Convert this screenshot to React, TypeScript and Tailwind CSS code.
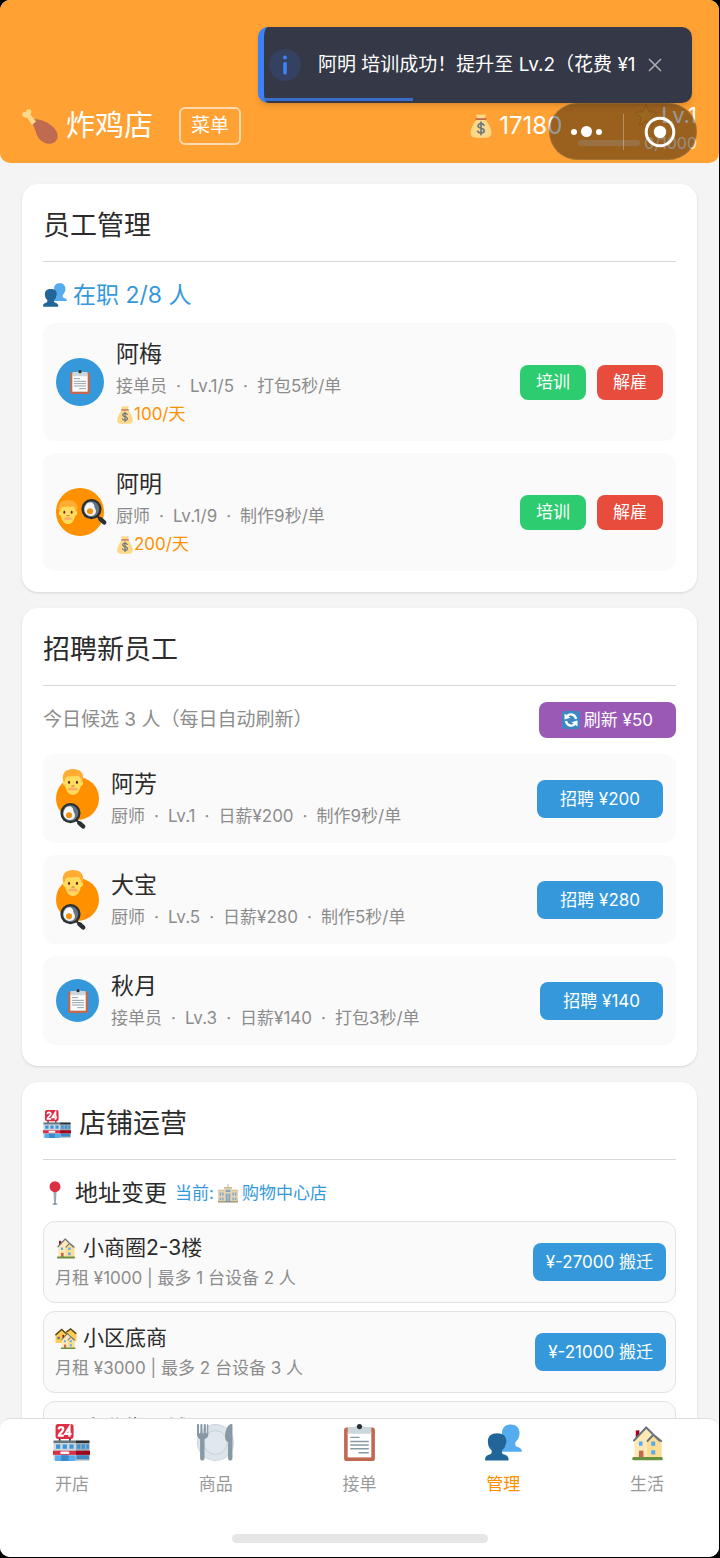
/**
 * Staff management screen of the shop game.
 */

import type { ReactNode } from 'react';

type IconProps = { className?: string };

function Svg({ className = 'size-6', children }: IconProps & { children: ReactNode }) {
  return (
    <svg viewBox="0 0 36 36" className={`shrink-0 ${className}`} aria-hidden="true">
      {children}
    </svg>
  );
}

function DrumstickIcon({ className }: IconProps) {
  return (
    <Svg className={className}>
      <path fill="#BE6B50" d="M11.500 11.400c5-.7 12.500 1.600 18.500 6.600 6.500 5.500 7.300 12.200 3 15.800-4.600 3.800-11.500 2-15.700-2.800-3.300-3.800-3.500-9.800-7.300-15.400-.9-1.400-.4-3.800 1.500-4.200z" />
      <path fill="#FFD98A" d="M2 9C-.4 7.600-.4 4.600 2 4c.7-.1 1.400 0 2 .3C3.800 2 6 .4 8 1.600c1.700 1 1.700 3.400.4 4.900l5.600 7-4 3.400L5 9.400C4.200 9.800 3 9.700 2 9z" />
    </Svg>
  );
}

function MoneyBagIcon({ className }: IconProps) {
  return (
    <Svg className={className}>
      <path fill="#FDD888" d="M12 8h12c3.500 4 8.500 10.500 9.500 19 .8 6-3 8.500-8 8.500h-15c-5 0-8.800-2.500-8-8.500C3.500 18.500 8.500 12 12 8z" />
      <path fill="#FDD888" d="M10.500 1.500c2.500-2 5 .5 7.500-.8 2.500 1.300 5-1.200 7.500.8L23.500 7h-11z" />
      <path fill="#BF6952" d="M11 6.500h14c1.500 0 1.500 2.500 0 2.500H11c-1.500 0-1.500-2.500 0-2.500z" />
      <path fill="none" stroke="#67757F" strokeWidth="2.400" strokeLinecap="round" d="M22.500 17c-.7-1.800-2.500-2.500-4.500-2.500-2.600 0-4.500 1.300-4.500 3.400 0 4.700 9.300 2.200 9.300 7 0 2.300-2 3.600-4.800 3.600-2.600 0-4.300-.9-5-2.800M18 12v19" />
    </Svg>
  );
}

function PeopleIcon({ className }: IconProps) {
  return (
    <Svg className={className}>
      <path fill="#55ACEE" d="M16.500 9C16.500 3.500 19.800.5 25 .5s8.600 3 8.600 8.500c0 3.700-1.800 6.900-4.100 8.600v2.300c0 1.300.8 2 2.300 2.500 2.600.8 4.200 2 4.200 4.600H14c0-2.600 1.600-3.800 4.200-4.600 1.500-.5 2.300-1.200 2.300-2.500v-2.300c-2.300-1.700-4-4.900-4-8.600z" />
      <path fill="#226699" d="M2.800 17C2.800 11.800 6 9 11.800 9s9 2.800 9 8c0 3.800-1.900 7-4.300 8.600v1.900c0 1.200.8 1.800 2.300 2.200 2.600.8 4.200 2 4.200 5.300 0 .3-.3.500-.6.500H.6c-.4 0-.6-.2-.6-.5 0-3.300 1.600-4.500 4.200-5.300 1.500-.4 2.300-1 2.300-2.200v-1.900C4.100 24 2.800 20.800 2.800 17z" />
    </Svg>
  );
}

function ClipboardIcon({ className }: IconProps) {
  return (
    <Svg className={className}>
      <rect x="3" y="3.500" width="30" height="32.500" rx="2.500" fill="#C1694F" />
      <rect x="6.500" y="8" width="23" height="24.500" fill="#FFF" />
      <path fill="#CCD6DD" d="M8 3h6c0-2.500 8-2.500 8 0h6c1 0 1.500.8 1.500 2v4.500h-23V5c0-1.200.5-2 1.500-2z" />
      <circle cx="18" cy="2.500" r="2.500" fill="#292F33" />
      <path stroke="#8899A6" strokeWidth="1.400" strokeLinecap="round" d="M9.500 13h8M9.500 17h17M9.500 20.500h17M9.500 24h17M17.500 28h9" />
    </Svg>
  );
}

function FaceIcon({ className }: IconProps) {
  return (
    <Svg className={className}>
      <path fill="#FFAC33" d="M4 15C2.500 5.500 8.500 0 18 0s15.500 5.500 14 15c-.4 3-2.500 5-2.500 5h-23S4.400 18 4 15z" />
      <path fill="#FFDC5D" d="M4 19.500c0-2 1.500-2.600 2.700-2.600.2-3.500.8-6 3.800-6.500 4.500-.8 10 .2 14.500-1.200 3 1.200 4.200 4.700 4.300 7.700 1.200 0 2.700.6 2.700 2.600 0 2.500-1.600 4-3.200 4C27.500 30.500 23.500 36 18 36S8.500 30.500 7.200 23.500c-1.600 0-3.200-1.500-3.200-4z" />
      <ellipse cx="12.500" cy="18.500" rx="1.400" ry="2.200" fill="#662113" />
      <ellipse cx="23.500" cy="18.500" rx="1.400" ry="2.200" fill="#662113" />
      <path fill="none" stroke="#C1694F" strokeWidth="1.400" strokeLinecap="round" d="M16.500 23.500h3" />
      <path fill="#FFAC63" d="M10.500 29c1.500-3 5-4 7.500-2.800 2.500-1.200 6-.2 7.500 2.800-4 1-11 1-15 0z" />
    </Svg>
  );
}

function PanIcon({ className }: IconProps) {
  return (
    <Svg className={className}>
      <path stroke="#292F33" strokeWidth="3" d="M21 22l6 6" />
      <path stroke="#292F33" strokeWidth="6" strokeLinecap="round" d="M27 28l5 4.500" />
      <circle cx="14.500" cy="14" r="14" fill="#292F33" />
      <circle cx="14.500" cy="14" r="10.800" fill="#66757F" />
      <path fill="#F5F8FA" d="M7 8c3-4 7.500-4.300 10-1.500 1.800 2 1 4 2.500 6.500 2 3.500 1.500 8-2.500 9.800-4 1.700-9 .2-11.300-4C4 15.500 4.800 11 7 8z" />
      <circle cx="12.500" cy="17" r="4.200" fill="#F4900C" />
    </Svg>
  );
}

function RefreshIcon({ className }: IconProps) {
  return (
    <Svg className={className}>
      <rect width="36" height="36" rx="4" fill="#3B88C3" />
      <path fill="none" stroke="#FFF" strokeWidth="4.500" d="M8 20a10.500 10.500 0 0 0 18 6M28 16a10.500 10.500 0 0 0-18-6" />
      <path fill="#FFF" d="M5 17V5l12 8.500zM31 19v12l-12-8.500z" />
    </Svg>
  );
}

function StoreIcon({ className }: IconProps) {
  return (
    <Svg className={className}>
      <path stroke="#292F33" strokeWidth="1.600" d="M6.500 13v5M16.500 13v5" />
      <rect x="2.500" y="0" width="17.500" height="14.500" rx="2.500" fill="#DD2E44" />
      <path fill="none" stroke="#FFF" strokeWidth="2.200" d="M5.500 5.200C5.800 2.300 10 2.300 10 5.200c0 2.300-4.300 3.700-4.300 6.200h4.800M16 12.500V3l-4 6.500h6" />
      <path fill="#CCD6DD" d="M.5 18H22v17.500H.5z" />
      <path fill="#99AAB5" d="M22 18h13.500v17.500H22z" />
      <path fill="#67757F" d="M.5 16H22v2.500H.5z" />
      <path fill="#292F33" d="M22 16h13.500v2.500H22z" />
      <path fill="#3B94D9" d="M3 20h4v4H3zm6.500 0h4v4h-4zm6.500 0h4v4h-4zm7.500 0h3v4h-3zm4.500 0h3v4h-3zm4.500 0h2.500v4h-2.500z" />
      <path fill="#DD2E44" d="M0 26h22v4H0z" />
      <path fill="#A0041E" d="M22 26h14v4H22z" />
      <rect x="7" y="26.800" width="9" height="2.400" rx="1.200" fill="#FFF" />
      <path fill="#55ACEE" d="M2 30.500h20V36H2z" />
      <path fill="#3B88C3" d="M8 30.500h7V36H8zM23 30.500h12V34H23z" />
    </Svg>
  );
}

function PlateIcon({ className }: IconProps) {
  return (
    <Svg className={className}>
      <circle cx="18" cy="18" r="18" fill="#CCD6DD" />
      <circle cx="18" cy="18" r="17" fill="#DCE5EB" />
      <circle cx="18" cy="18" r="11.500" fill="#E1E8ED" stroke="#BDCAD3" strokeWidth=".8" />
      <path fill="#8899A6" d="M0 1c0-1.300 2-1.300 2 0v7.500c0 .8 1.300.8 1.300 0V1c0-1.300 2-1.300 2 0v7.500c0 .8 1.300.8 1.300 0V1c0-1.300 2-1.300 2 0v7.500c0 .8 1.200.8 1.200 0V1c0-1.300 1.200-1.300 1.200 0v9.500c0 2-1.600 3.800-3.700 4.300v18.500c0 3-4.300 3-4.300 0V14.800C1.300 14.200 0 12.800 0 10.500z" />
      <path fill="#8899A6" d="M34.500 1v32.300c0 3-4.300 3-4.300 0V17.500c-2.800-.8-3.300-4-2.700-8C28.300 4 31 0 33.300 0c.7 0 1.200.4 1.200 1z" />
    </Svg>
  );
}

function HouseShape() {
  return (
    <g transform="translate(2.200 1.500) scale(.88 .94)">
      <path fill="#A0041E" d="M5 5h4v9H5z" />
      <path fill="#FFE8B6" d="M3.500 15L16 2.500 24 9l9.500 7v17h-30z" />
      <path fill="#FFD983" d="M17.500 16L24 9.500l9.500 6.500v17H17.500z" opacity=".7" />
      <path fill="none" stroke="#66757F" strokeWidth="2.200" strokeLinecap="round" strokeLinejoin="round" d="M3 15.500L16.500 2 31 15.500M18 16l6.500-6.500L33 16" />
      <path fill="#55ACEE" d="M8.500 16.500h4v4.500h-4zm13.500 0h4.500v4.500H22zm0 9h4.500V30H22z" />
      <path fill="#C1694F" d="M8.500 26h5v8h-5z" />
      <rect x="1" y="32.500" width="34" height="3.500" rx="1.700" fill="#6A9140" />
    </g>
  );
}

function HouseIcon({ className }: IconProps) {
  return (
    <Svg className={className}>
      <HouseShape />
    </Svg>
  );
}

function HousesIcon({ className }: IconProps) {
  return (
    <Svg className={className}>
      <path fill="#FFCC4D" d="M1 12L11 3l9 9v14H1zM18 10l8-7 9 8v12H18z" />
      <path fill="none" stroke="#5C4B20" strokeWidth="2.400" strokeLinecap="round" d="M1.500 12.500L11 4l7 6.500M19 8l6.500-5L34 10.500" />
      <path fill="#66757F" d="M4 16h4v4H4z" />
      <g transform="translate(7 8) scale(.8)">
        <HouseShape />
      </g>
    </Svg>
  );
}

function MallIcon({ className }: IconProps) {
  return (
    <Svg className={className}>
      <path fill="#E6D5B0" d="M0 13h11V8h14v5h11v21H0z" />
      <path fill="#C9B78E" d="M0 12h11v2H0zm25 0h11v2H25zM11 7h14v2.500H11z" />
      <path stroke="#99AAB5" strokeWidth="1.400" d="M18 2v6" />
      <path fill="#7FA6C9" d="M3 17h2.500v6H3zm4.500 0H10v6H7.500zM26 17h2.500v6H26zm4.500 0H33v6h-2.500zM3 26h2.500v5H3zm4.500 0H10v5H7.500zM26 26h2.500v5H26zm4.500 0H33v5h-2.500zM14 12h8v4h-8zm0 7h3.300v15H14zm4.700 0H22v15h-3.300z" />
      <path fill="#8A7E63" d="M0 33h36v2H0z" />
    </Svg>
  );
}

function PinIcon({ className }: IconProps) {
  return (
    <Svg className={className}>
      <path fill="#99AAB5" d="M15.500 13h5l-1.200 21.500c-.1 1.500-2.500 1.500-2.600 0z" />
      <path fill="#66757F" d="M14 34.500c0-1 8-1 8 0s-8 1.500-8 0z" />
      <circle cx="18" cy="8.500" r="8.200" fill="#DD2E44" />
    </Svg>
  );
}

function StarIcon({ className }: IconProps) {
  return (
    <Svg className={className}>
      <path fill="#FFAC33" stroke="#D9912B" strokeWidth="1.500" d="M18 1l5 11.500 12.500 1.200-9.400 8.300L29 34.500l-11-6.600-11 6.600L9.900 22 .5 13.700 13 12.500z" />
    </Svg>
  );
}

type Role = 'cashier' | 'chef';

const employees: { name: string; role: Role; detail: string[]; wage: string }[] = [
  { name: '阿梅', role: 'cashier', detail: ['接单员', 'Lv.1/5', '打包5秒/单'], wage: '100/天' },
  { name: '阿明', role: 'chef', detail: ['厨师', 'Lv.1/9', '制作9秒/单'], wage: '200/天' },
];

const candidates: { name: string; role: Role; detail: string[]; price: string }[] = [
  { name: '阿芳', role: 'chef', detail: ['厨师', 'Lv.1', '日薪¥200', '制作9秒/单'], price: '¥200' },
  { name: '大宝', role: 'chef', detail: ['厨师', 'Lv.5', '日薪¥280', '制作5秒/单'], price: '¥280' },
  { name: '秋月', role: 'cashier', detail: ['接单员', 'Lv.3', '日薪¥140', '打包3秒/单'], price: '¥140' },
];

const locations = [
  { name: '小商圈2-3楼', Icon: HouseIcon, detail: '月租 ¥1000 | 最多 1 台设备 2 人', price: '¥-27000' },
  { name: '小区底商', Icon: HousesIcon, detail: '月租 ¥3000 | 最多 2 台设备 3 人', price: '¥-21000' },
  { name: '商业街旺铺', Icon: MallIcon },
];

const tabs = [
  { label: '开店', Icon: StoreIcon },
  { label: '商品', Icon: PlateIcon },
  { label: '接单', Icon: ClipboardIcon },
  { label: '管理', Icon: PeopleIcon, active: true },
  { label: '生活', Icon: HouseIcon },
];

function Card({ title, icon, children }: { title: string; icon?: ReactNode; children: ReactNode }) {
  return (
    <section className="rounded-2xl bg-white p-[21px] shadow-sm">
      <h2 className="mb-4 flex items-center gap-2 border-b border-[#d8d8d8] pb-3.5 text-[27px] leading-[42px] text-[#2b2b2b]">
        {icon}
        {title}
      </h2>
      {children}
    </section>
  );
}

function Avatar({ role, stacked }: { role: Role; stacked?: boolean }) {
  const size = stacked ? 'size-[43px]' : 'size-12';
  if (role === 'cashier') {
    return (
      <div className={`flex shrink-0 items-center justify-center rounded-full bg-[#3498db] ${size}`}>
        <ClipboardIcon className="size-6" />
      </div>
    );
  }
  return (
    <div
      className={`flex shrink-0 items-center rounded-full bg-[#ff9000] ${size} ${
        stacked ? 'flex-col justify-center gap-2 pr-2.5' : 'gap-px'
      }`}
    >
      <FaceIcon className={stacked ? 'size-[26px]' : 'size-6'} />
      <PanIcon className="size-[26px]" />
    </div>
  );
}

function Person({ name, detail, children }: { name: string; detail: string[]; children?: ReactNode }) {
  return (
    <div className="ml-3 flex-1">
      <div className="text-[23px] leading-9 text-[#2b2b2b]">{name}</div>
      <div className="text-[17px] leading-[29px] text-[#8c8c8c]">
        {detail.map((part, i) => (
          <span key={part}>
            {i > 0 && <span className="mx-[9px]">·</span>}
            {part}
          </span>
        ))}
      </div>
      {children}
    </div>
  );
}

function Header() {
  return (
    <header className="flex items-center rounded-b-[10px] bg-[#ffa133] px-[22px] pt-[95px] pb-1.5 text-white">
      <DrumstickIcon className="size-9" />
      <h1 className="ml-2 text-[29px] leading-10">炸鸡店</h1>
      <button type="button" className="ml-[26px] rounded-md border-2 border-white/60 px-2.5 text-[19px] leading-[34px]">
        菜单
      </button>
      <div className="ml-auto flex items-center gap-1.5">
        <MoneyBagIcon className="size-6" />
        <span className="text-2xl leading-9">17180</span>
      </div>
      <div className="ml-4 flex flex-col items-end pt-1.5">
        <div className="flex items-center gap-1 text-[22px] leading-7">
          <StarIcon className="size-[22px]" />
          Lv.1
        </div>
        <div className="flex items-center gap-1 text-base leading-7">
          <div className="h-1.5 w-[62px] rounded-full bg-white/30" />
          <span className="text-white/80">0/1000</span>
        </div>
      </div>
    </header>
  );
}

function Toast() {
  return (
    <div
      role="status"
      className="absolute top-[27px] right-[27px] flex h-[76px] w-[434px] items-center overflow-hidden rounded-[10px] border-l-[6px] border-[#3b82f6] bg-[#353846] pr-[30px] pl-[5px] text-[19px] text-white shadow-md"
    >
      <span className="flex size-8 shrink-0 items-center justify-center rounded-full bg-[#344160]">
        <svg viewBox="0 0 6 20" className="h-5 w-1.5" aria-hidden="true">
          <circle cx="3" cy="2.500" r="2" fill="#3b82f6" />
          <rect x="1.200" y="7" width="3.600" height="12.500" rx="1.500" fill="#3b82f6" />
        </svg>
      </span>
      <p className="ml-[17px] min-w-0 flex-1 whitespace-nowrap">阿明 培训成功！提升至 Lv.2（花费 ¥1</p>
      <button type="button" aria-label="关闭" className="text-white/60">
        <svg viewBox="0 0 14 14" className="size-3.5" aria-hidden="true">
          <path fill="none" stroke="currentColor" strokeWidth="1.500" d="M1 1l12 12M13 1L1 13" />
        </svg>
      </button>
      <div className="absolute bottom-0.5 left-0 h-[3px] w-[149px] bg-[#3b6ec8]" />
    </div>
  );
}

function Capsule() {
  return (
    <div className="absolute top-[103px] right-[22px] flex h-[57px] w-[148px] items-center rounded-full border border-white/10 bg-black/40">
      <button type="button" aria-label="更多" className="flex h-full flex-1 items-center justify-center gap-1">
        <span className="size-1.5 rounded-full bg-white" />
        <span className="size-[11px] rounded-full bg-white" />
        <span className="size-1.5 rounded-full bg-white" />
      </button>
      <span className="h-9 w-px bg-white/30" />
      <button type="button" aria-label="退出" className="flex h-full flex-1 items-center justify-center">
        <svg viewBox="0 0 32 32" className="size-8" aria-hidden="true">
          <circle cx="16" cy="16" r="13.800" fill="none" stroke="#fff" strokeWidth="3" />
          <circle cx="16" cy="16" r="6.200" fill="#fff" />
        </svg>
      </button>
    </div>
  );
}

function StaffCard() {
  return (
    <Card title="员工管理">
      <h3 className="mb-[11px] flex items-center gap-1.5 text-[23px] leading-[34px] text-[#3498db]">
        <PeopleIcon className="size-6" />
        在职 2/8 人
      </h3>
      <ul className="flex flex-col gap-3">
        {employees.map((e) => (
          <li key={e.name} className="flex items-center rounded-xl bg-[#fafafa] p-[13px]">
            <Avatar role={e.role} />
            <Person name={e.name} detail={e.detail}>
              <div className="flex items-center text-[17px] leading-[27px] text-[#ff9000]">
                <MoneyBagIcon className="size-[18px]" />
                {e.wage}
              </div>
            </Person>
            <div className="flex gap-[11px] text-[17px] leading-[35px] text-white">
              <button type="button" className="rounded-lg bg-[#2ecc71] px-4">
                培训
              </button>
              <button type="button" className="rounded-lg bg-[#e74c3c] px-4">
                解雇
              </button>
            </div>
          </li>
        ))}
      </ul>
    </Card>
  );
}

function RecruitCard() {
  return (
    <Card title="招聘新员工">
      <div className="mb-4 flex items-center justify-between">
        <p className="text-[19px] leading-9 text-[#8c8c8c]">今日候选 3 人（每日自动刷新）</p>
        <button
          type="button"
          className="flex items-center gap-1 rounded-lg bg-[#9b59b6] px-[23px] text-[17px] leading-9 text-white"
        >
          <RefreshIcon className="size-[18px]" />
          刷新 ¥50
        </button>
      </div>
      <ul className="flex flex-col gap-3">
        {candidates.map((c) => (
          <li key={c.name} className="flex items-center rounded-xl bg-[#fafafa] px-[13px] py-3">
            <Avatar role={c.role} stacked />
            <Person name={c.name} detail={c.detail} />
            <button type="button" className="rounded-lg bg-[#3498db] px-[23px] text-[17px] leading-[38px] text-white">
              招聘 {c.price}
            </button>
          </li>
        ))}
      </ul>
    </Card>
  );
}

function ShopCard() {
  return (
    <Card title="店铺运营" icon={<StoreIcon className="size-7" />}>
      <h3 className="mb-[11px] flex items-center gap-2 text-[23px] leading-[34px] text-[#2b2b2b]">
        <PinIcon className="size-6" />
        地址变更
        <span className="flex items-center gap-1 text-[17px] text-[#3498db]">
          当前:
          <MallIcon className="size-5" />
          购物中心店
        </span>
      </h3>
      <ul className="flex flex-col gap-2">
        {locations.map(({ name, Icon, detail, price }) => (
          <li
            key={name}
            className="flex items-center justify-between rounded-xl border border-[#e2e2e2] bg-[#fafafa] py-2.5 pr-[9px] pl-[11px]"
          >
            <div>
              <div className="flex items-center gap-1.5 text-[21px] leading-8 text-[#2b2b2b]">
                <Icon className="size-[22px]" />
                {name}
              </div>
              {detail && <div className="text-[17px] leading-7 text-[#8c8c8c]">{detail}</div>}
            </div>
            {price && (
              <button type="button" className="rounded-lg bg-[#3498db] px-[13px] text-[17px] leading-[38px] text-white">
                {price} 搬迁
              </button>
            )}
          </li>
        ))}
      </ul>
    </Card>
  );
}

function TabBar() {
  return (
    <nav className="relative rounded-t-[10px] border-t border-[#dedede] bg-white pt-[5px]">
      <div className="flex">
        {tabs.map(({ label, Icon, active }) => (
          <a
            key={label}
            href="#"
            className={`flex flex-1 flex-col items-center gap-2 text-[17px] leading-[30px] ${
              active ? 'text-[#ff9000]' : 'text-[#999999]'
            }`}
          >
            <Icon className="size-[37px]" />
            {label}
          </a>
        ))}
      </div>
      <div className="mx-auto mt-[35px] mb-3.5 h-[9px] w-64 rounded-full bg-[#e6e6e6]" />
    </nav>
  );
}

function App() {
  return (
    <div className="h-screen bg-black pr-px pb-px font-[Inter,'Noto_Sans_CJK_SC',sans-serif]">
      <div className="relative flex h-full flex-col overflow-hidden rounded-[10px] bg-[#f4f4f4]">
        <Header />
        <main className="flex min-h-0 flex-1 flex-col gap-4 overflow-y-auto px-[22px] pt-[21px] [scrollbar-width:none]">
          <StaffCard />
          <RecruitCard />
          <ShopCard />
        </main>
        <TabBar />
        <Capsule />
        <Toast />
      </div>
    </div>
  );
}

export default App;
